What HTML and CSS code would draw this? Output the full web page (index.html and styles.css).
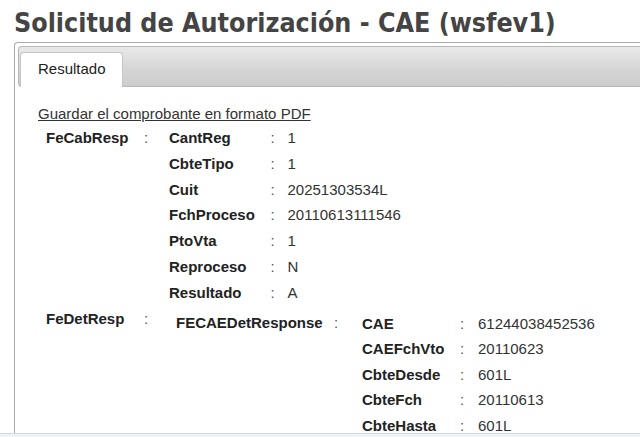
FILE: index.html
```html
<!DOCTYPE html>
<html lang="es">
<head>
<meta charset="utf-8">
<title>Solicitud de Autorización - CAE (wsfev1)</title>
<link rel="stylesheet" href="styles.css">
</head>
<body>
<h1 class="title">Solicitud de Autorización - CAE (wsfev1)</h1>
<div class="tabs">
  <div class="tabs-nav"><div class="tab">Resultado</div></div>
  <div class="panel">
    <a class="pdf-link" href="#">Guardar el comprobante en formato PDF</a>
    <div class="sec sec-cab">
      <div class="key">FeCabResp</div><div class="colon">:</div>
      <div class="fields f-cab">
        <div class="key">CantReg</div><div class="colon">:</div><div class="val">1</div>
        <div class="key">CbteTipo</div><div class="colon">:</div><div class="val">1</div>
        <div class="key">Cuit</div><div class="colon">:</div><div class="val">20251303534L</div>
        <div class="key">FchProceso</div><div class="colon">:</div><div class="val">20110613111546</div>
        <div class="key">PtoVta</div><div class="colon">:</div><div class="val">1</div>
        <div class="key">Reproceso</div><div class="colon">:</div><div class="val">N</div>
        <div class="key">Resultado</div><div class="colon">:</div><div class="val">A</div>
      </div>
    </div>
    <div class="sec sec-det">
      <div class="key">FeDetResp</div><div class="colon">:</div>
      <div class="fields f-det">
        <div class="key">FECAEDetResponse</div><div class="colon">:</div>
        <div class="fields f-cae">
          <div class="key">CAE</div><div class="colon">:</div><div class="val">61244038452536</div>
          <div class="key">CAEFchVto</div><div class="colon">:</div><div class="val">20110623</div>
          <div class="key">CbteDesde</div><div class="colon">:</div><div class="val">601L</div>
          <div class="key">CbteFch</div><div class="colon">:</div><div class="val">20110613</div>
          <div class="key">CbteHasta</div><div class="colon">:</div><div class="val">601L</div>
        </div>
      </div>
    </div>
  </div>
</div>
<div class="bottom-bar"></div>
</body>
</html>
```
FILE: styles.css
```css
html, body {
  margin: 0;
  padding: 0;
  overflow: hidden;
  background: #ffffff;
}
body {
  font-family: "Liberation Sans", Arial, sans-serif;
  font-size: 15px;
  color: #222222;
}
.title {
  margin: 7px 0 3px 14px;
  font-family: "DejaVu Sans Condensed", "DejaVu Sans", sans-serif;
  font-stretch: condensed;
  font-weight: bold;
  font-size: 26.6px;
  line-height: 32px;
  color: #444444;
  white-space: nowrap;
}
.tabs {
  box-sizing: border-box;
  margin-left: 14px;
  height: 391px;
  overflow: hidden;
  border: 1px solid #aaaaaa;
  border-right: none;
  border-bottom: none;
  border-radius: 4px 0 0 0;
  padding: 3px 0 0 3px;
}
.tabs-nav {
  display: flex;
  align-items: flex-start;
  height: 39px;
  border: 1px solid #b8b8b8;
  border-right: none;
  border-radius: 4px 0 0 4px;
  background: linear-gradient(#e9e9e9, #d6d6d6 55%, #cccccc);
}
.tab {
  margin: 5px 0 -1px 1px;
  padding: 0 16px 3px 17px;
  line-height: 31px;
  background: #ffffff;
  border: 1px solid #c5c5c5;
  border-bottom: none;
  border-radius: 4px 4px 0 0;
  color: #222222;
}
.panel {
  padding: 18px 0 0 20px;
}
.pdf-link {
  display: inline-block;
  line-height: 17px;
  color: #333333;
  text-decoration: underline;
}
.sec {
  display: grid;
  grid-template-columns: 98px 25px auto;
  align-items: start;
  margin-left: 8px;
  line-height: 25.8px;
}
.sec-cab {
  margin-top: 3px;
}
.sec-det {
  grid-template-columns: 98px 32px auto;
}
.fields {
  display: grid;
  align-items: start;
  justify-content: start;
}
.f-cab {
  grid-template-columns: 101.5px 17px auto;
}
.f-det {
  grid-template-columns: 158px 28px auto;
  padding-top: 4px;
}
.f-cae {
  grid-template-columns: 98px 18px auto;
  padding-top: 1px;
  line-height: 25.5px;
}
.key {
  font-weight: bold;
  color: #222222;
  white-space: nowrap;
}
.colon {
  color: #555555;
}
.val {
  color: #333333;
  white-space: nowrap;
}
.bottom-bar {
  position: fixed;
  left: 0;
  right: 0;
  bottom: 0;
  height: 3px;
  border-top: 1px solid #d3dadf;
  background: #eef2f6;
}
```
